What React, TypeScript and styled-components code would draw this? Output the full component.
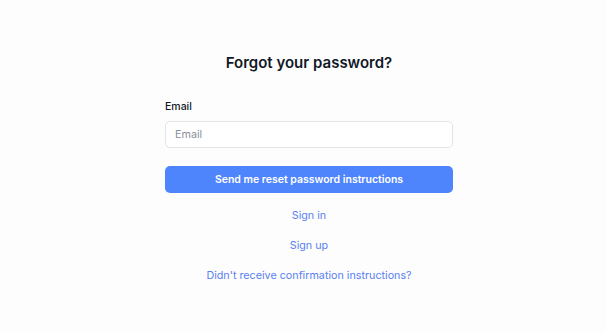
import styled, { createGlobalStyle } from 'styled-components';

const GlobalStyle = createGlobalStyle`
  html, body {
    margin: 0;
    padding: 0;
    background: #fdfdfd;
    font-family: Inter, "Liberation Sans", sans-serif;
  }
  * { box-sizing: border-box; }
`;

const Page = styled.main`
  display: flex;
  justify-content: center;
  padding: 52px 0 0 12px;
`;

const Form = styled.form`
  width: 288px;
  display: flex;
  flex-direction: column;
`;

const Title = styled.h1`
  margin: 0 0 27px;
  text-align: center;
  font-size: 15px;
  line-height: 21px;
  font-weight: 600;
  color: #111827;
`;

const Label = styled.label`
  font-size: 10.5px;
  line-height: 14px;
  font-weight: 500;
  color: #111827;
  margin-bottom: 7px;
`;

const Input = styled.input`
  height: 27px;
  padding: 0 9px;
  border: 1px solid #e2e4e8;
  border-radius: 5px;
  background: #fff;
  font-family: inherit;
  font-size: 10.75px;
  color: #111827;
  outline: none;

  &::placeholder {
    color: #8a8f99;
  }
`;

const Button = styled.button`
  margin-top: 18px;
  height: 27px;
  border: none;
  border-radius: 5px;
  background: #4f85fc;
  color: #fff;
  font-family: inherit;
  font-size: 10.5px;
  font-weight: 600;
  cursor: pointer;
`;

const Links = styled.div`
  margin-top: 16px;
  display: flex;
  flex-direction: column;
  align-items: center;
  gap: 16px;
`;

const LinkText = styled.a`
  font-size: 10.75px;
  line-height: 14px;
  color: #5b7ff2;
  text-decoration: none;
`;

export default function App() {
  return (
    <>
      <GlobalStyle />
      <Page>
        <Form onSubmit={(e) => e.preventDefault()}>
          <Title>Forgot your password?</Title>
          <Label htmlFor="email">Email</Label>
          <Input id="email" type="email" placeholder="Email" />
          <Button type="submit">Send me reset password instructions</Button>
          <Links>
            <LinkText href="#">Sign in</LinkText>
            <LinkText href="#">Sign up</LinkText>
            <LinkText href="#">Didn't receive confirmation instructions?</LinkText>
          </Links>
        </Form>
      </Page>
    </>
  );
}
